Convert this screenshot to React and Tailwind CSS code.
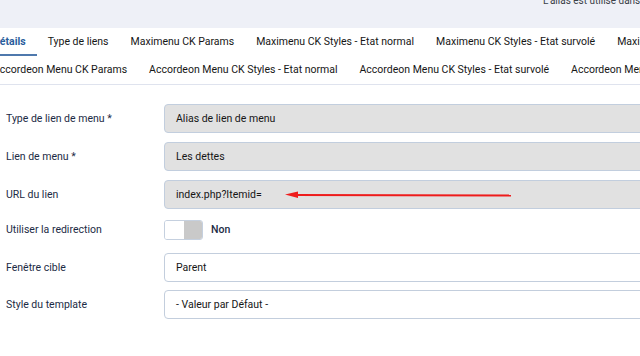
import React from 'react';

const tabsTop = [
  'Détails',
  'Type de liens',
  'Maximenu CK Params',
  'Maximenu CK Styles - Etat normal',
  'Maximenu CK Styles - Etat survolé',
  'Maximenu CK Styles - Sous-menu',
];

const tabsBottom = [
  'Accordeon Menu CK Params',
  'Accordeon Menu CK Styles - Etat normal',
  'Accordeon Menu CK Styles - Etat survolé',
  'Accordeon Menu CK Styles - Sous-menu',
];

const Field = ({ label, children, className }) => (
  <div className={`flex items-center ${className}`}>
    <label className="w-[158px] shrink-0 text-[10.5px] text-[#1c2b45]">{label}</label>
    <div className="flex-1 min-w-0">{children}</div>
  </div>
);

const ReadOnly = ({ value, children }) => (
  <div className="relative h-[29px] w-[520px] rounded-l-[4px] border border-[#c2cede] bg-[#e1e1e1] pl-[11px] flex items-center text-[10.5px] text-[#161616]">
    {value}
    {children}
  </div>
);

const Select = ({ value }) => (
  <div className="h-[29px] w-[520px] rounded-l-[4px] border border-[#c3cedd] bg-white pl-[11px] flex items-center text-[10.5px] text-[#161616]">
    {value}
  </div>
);

export default function App() {
  return (
    <div className="w-[640px] h-[356px] overflow-hidden bg-white" style={{ fontFamily: 'Roboto, "Liberation Sans", sans-serif' }}>
      <div className="h-[28px] bg-[#eef0f7] overflow-hidden">
        <div className="pl-[543px] -mt-[7px] whitespace-nowrap text-[10px] text-[#3a3f48]">
          L'alias est utilisé dans l'URL
        </div>
      </div>

      <div className="border-b border-[#dfe3ee]">
        <div className="flex h-[28px] -ml-[18px] whitespace-nowrap">
          {tabsTop.map((t, i) => (
            <div
              key={t}
              className={`px-[11px] flex items-center text-[10.5px] shrink-0 ${
                i === 0
                  ? 'font-bold text-[#2a5d9c] border-b-2 border-[#4f79ad] pt-[2px]'
                  : 'text-[#161616]'
              }`}
            >
              {t}
            </div>
          ))}
        </div>
        <div className="flex h-[28px] -ml-[18px] whitespace-nowrap">
          {tabsBottom.map((t) => (
            <div key={t} className="px-[11px] flex items-center text-[10.5px] text-[#161616] shrink-0">
              {t}
            </div>
          ))}
        </div>
      </div>

      <div className="pl-[6px] pt-[19px]">
        <Field label="Type de lien de menu *">
          <ReadOnly value="Alias de lien de menu" />
        </Field>
        <Field label="Lien de menu *" className="mt-[9px]">
          <ReadOnly value="Les dettes" />
        </Field>
        <Field label="URL du lien" className="mt-[9px]">
          <ReadOnly value="index.php?Itemid=">
            <svg className="absolute left-[120px] top-[9px]" width="230" height="10" viewBox="0 0 230 10">
              <line x1="8" y1="5" x2="226" y2="5.5" stroke="#ee1c1c" strokeWidth="2" />
              <polygon points="0,4.5 13,1.5 13,8" fill="#ee1c1c" />
            </svg>
          </ReadOnly>
        </Field>
        <Field label="Utiliser la redirection" className="mt-[11px]">
          <div className="flex items-center">
            <div className="flex h-[20px] w-[39px] rounded-[3px] border border-[#c5d0df] overflow-hidden">
              <div className="w-1/2 bg-white" />
              <div className="w-1/2 bg-[#c9c9c9]" />
            </div>
            <span className="ml-[8px] text-[10.5px] font-medium text-[#1c2b45]">Non</span>
          </div>
        </Field>
        <Field label="Fenêtre cible" className="mt-[13px]">
          <Select value="Parent" />
        </Field>
        <Field label="Style du template" className="mt-[8px]">
          <Select value="- Valeur par Défaut -" />
        </Field>
      </div>
    </div>
  );
}
